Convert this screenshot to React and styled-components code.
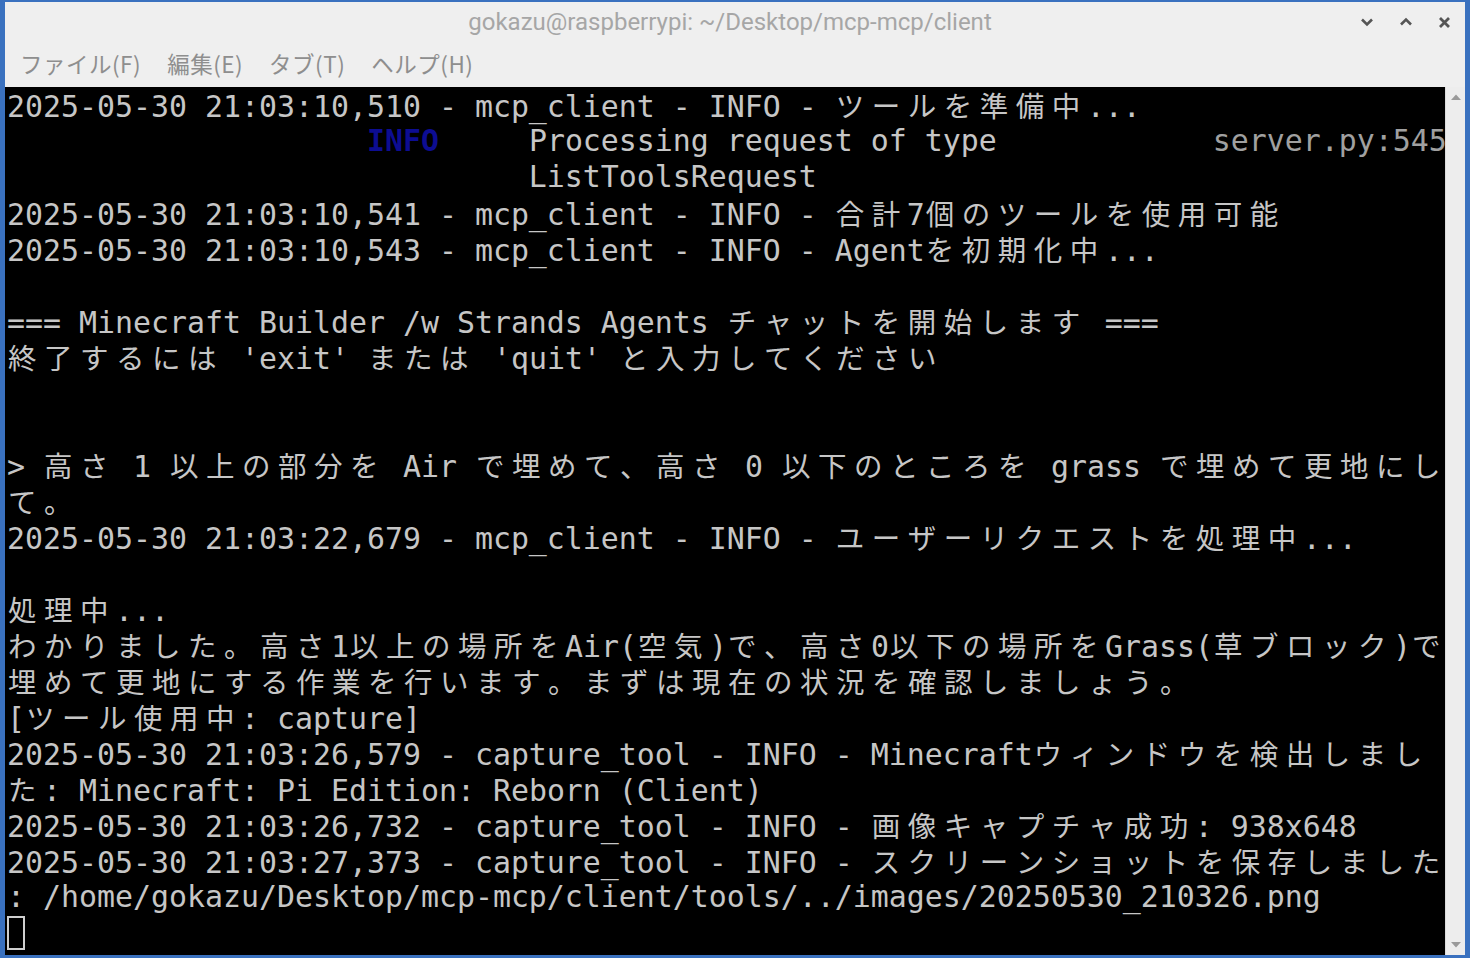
import React from "react";
import styled, { createGlobalStyle } from "styled-components";

const GlobalStyle = createGlobalStyle`
  html, body {
    margin: 0;
    padding: 0;
    background: #3a71bf;
    overflow: hidden;
  }
  #root {
    width: 1470px;
    height: 958px;
  }
`;

const Desktop = styled.div`
  width: 1470px;
  height: 958px;
  box-sizing: border-box;
  padding: 2px 5px 3px 5px;
  background: #3a71bf;
  display: flex;
`;

const Window = styled.div`
  flex: 1;
  display: flex;
  flex-direction: column;
  background: #efefef;
  overflow: hidden;
`;

const TitleBar = styled.div`
  height: 40px;
  flex-shrink: 0;
  display: grid;
  grid-template-columns: 1fr auto 1fr;
  align-items: center;
`;

const Title = styled.div`
  grid-column: 2;
  font-family: Roboto, "Liberation Sans", sans-serif;
  font-size: 24px;
  color: #a6a6a6;
  padding-right: 10px;
  white-space: nowrap;
`;

const Controls = styled.div`
  grid-column: 3;
  justify-self: end;
  display: flex;
  align-items: center;
  gap: 25px;
  padding-right: 14px;
  svg {
    display: block;
  }
`;

const MenuBar = styled.div`
  height: 45px;
  flex-shrink: 0;
  display: flex;
  align-items: center;
  gap: 26px;
  padding: 0 0 3px 15px;
  box-sizing: border-box;
  font-family: "Noto Sans CJK JP", sans-serif;
  font-size: 22.5px;
  letter-spacing: 0.5px;
  color: #8e8e8e;
`;

const MenuItem = styled.span`
  white-space: nowrap;
`;

const Body = styled.div`
  flex: 1;
  display: flex;
  min-height: 0;
`;

const Screen = styled.div`
  flex: 1;
  background: #000;
  padding-left: 2px;
  overflow: hidden;
`;

const Line = styled.div`
  height: 36px;
  line-height: 36px;
  white-space: pre;
  font-family: "DejaVu Sans Mono", "Liberation Mono", monospace;
  font-size: 29.9px;
  color: #c6c6c6;
`;

const Tone = styled.span`
  color: ${(p) => (p.$tone === "blue" ? "#0d0d92" : p.$tone === "dim" ? "#a0a0a0" : "inherit")};
  font-weight: ${(p) => (p.$tone === "blue" ? 700 : 400)};
`;

const Wide = styled.span`
  display: inline-block;
  width: 36px;
  padding-left: 1px;
  box-sizing: border-box;
  text-align: left;
  font-family: "Noto Sans CJK JP", sans-serif;
  font-size: 28.5px;
  line-height: 36px;
`;

const Cursor = styled.span`
  display: inline-block;
  width: 18px;
  height: 34px;
  box-sizing: border-box;
  border: 2px solid #cfcfcf;
  vertical-align: top;
  margin-top: 1px;
`;

const Scrollbar = styled.div`
  width: 19px;
  flex-shrink: 0;
  background: #ededed;
  border-left: 1px solid #dcdcdc;
  display: flex;
  flex-direction: column;
  justify-content: space-between;
  align-items: center;
  padding: 6px 0 6px;
`;

const WIDE = /[\u1100-\u115f\u2e80-\ua4cf\uac00-\ud7a3\uf900-\ufaff\ufe30-\ufe4f\uff00-\uff60\uffe0-\uffe6]/;

function cells(text, keyBase) {
  const out = [];
  let buf = "";
  let i = 0;
  for (const ch of text) {
    if (WIDE.test(ch)) {
      if (buf) {
        out.push(buf);
        buf = "";
      }
      out.push(<Wide key={`${keyBase}-${i}`}>{ch}</Wide>);
    } else {
      buf += ch;
    }
    i++;
  }
  if (buf) out.push(buf);
  return out;
}

const pad = (n) => " ".repeat(n);

const lines = [
  [["2025-05-30 21:03:10,510 - mcp_client - INFO - ツールを準備中..."]],
  [[pad(20)], ["INFO", "blue"], [pad(5) + "Processing request of type" + pad(12)], ["server.py:545", "dim"]],
  [[pad(29) + "ListToolsRequest"]],
  [["2025-05-30 21:03:10,541 - mcp_client - INFO - 合計7個のツールを使用可能"]],
  [["2025-05-30 21:03:10,543 - mcp_client - INFO - Agentを初期化中..."]],
  [[""]],
  [["=== Minecraft Builder /w Strands Agents チャットを開始します ==="]],
  [["終了するには 'exit' または 'quit' と入力してください"]],
  [[""]],
  [[""]],
  [["> 高さ 1 以上の部分を Air で埋めて、高さ 0 以下のところを grass で埋めて更地にし"]],
  [["て。"]],
  [["2025-05-30 21:03:22,679 - mcp_client - INFO - ユーザーリクエストを処理中..."]],
  [[""]],
  [["処理中..."]],
  [["わかりました。高さ1以上の場所をAir(空気)で、高さ0以下の場所をGrass(草ブロック)で"]],
  [["埋めて更地にする作業を行います。まずは現在の状況を確認しましょう。"]],
  [["[ツール使用中: capture]"]],
  [["2025-05-30 21:03:26,579 - capture_tool - INFO - Minecraftウィンドウを検出しまし"]],
  [["た: Minecraft: Pi Edition: Reborn (Client)"]],
  [["2025-05-30 21:03:26,732 - capture_tool - INFO - 画像キャプチャ成功: 938x648"]],
  [["2025-05-30 21:03:27,373 - capture_tool - INFO - スクリーンショットを保存しました"]],
  [[": /home/gokazu/Desktop/mcp-mcp/client/tools/../images/20250530_210326.png"]],
];

const ChevronDown = () => (
  <svg width="14" height="10" viewBox="0 0 14 10">
    <path d="M2 2.5 L7 7.5 L12 2.5" fill="none" stroke="#555" strokeWidth="2.6" />
  </svg>
);

const ChevronUp = () => (
  <svg width="14" height="10" viewBox="0 0 14 10">
    <path d="M2 7.5 L7 2.5 L12 7.5" fill="none" stroke="#555" strokeWidth="2.6" />
  </svg>
);

const CloseIcon = () => (
  <svg width="13" height="13" viewBox="0 0 13 13">
    <path d="M2 2 L11 11 M11 2 L2 11" fill="none" stroke="#555" strokeWidth="2.8" />
  </svg>
);

const ArrowUp = () => (
  <svg width="12" height="8" viewBox="0 0 12 8">
    <path d="M1 7 L6 1.5 L11 7 Z" fill="#9a9a9a" />
  </svg>
);

const ArrowDown = () => (
  <svg width="12" height="8" viewBox="0 0 12 8">
    <path d="M1 1 L6 6.5 L11 1 Z" fill="#9a9a9a" />
  </svg>
);

export default function App() {
  return (
    <>
      <GlobalStyle />
      <Desktop>
        <Window>
          <TitleBar>
            <Title>gokazu@raspberrypi: ~/Desktop/mcp-mcp/client</Title>
            <Controls>
              <ChevronDown />
              <ChevronUp />
              <CloseIcon />
            </Controls>
          </TitleBar>
          <MenuBar>
            <MenuItem>ファイル(F)</MenuItem>
            <MenuItem>編集(E)</MenuItem>
            <MenuItem>タブ(T)</MenuItem>
            <MenuItem>ヘルプ(H)</MenuItem>
          </MenuBar>
          <Body>
            <Screen>
              {lines.map((segs, li) => (
                <Line key={li}>
                  {segs.map(([text, tone], si) => (
                    <Tone key={si} $tone={tone}>
                      {cells(text, `${li}-${si}`)}
                    </Tone>
                  ))}
                </Line>
              ))}
              <Line>
                <Cursor />
              </Line>
            </Screen>
            <Scrollbar>
              <ArrowUp />
              <ArrowDown />
            </Scrollbar>
          </Body>
        </Window>
      </Desktop>
    </>
  );
}
